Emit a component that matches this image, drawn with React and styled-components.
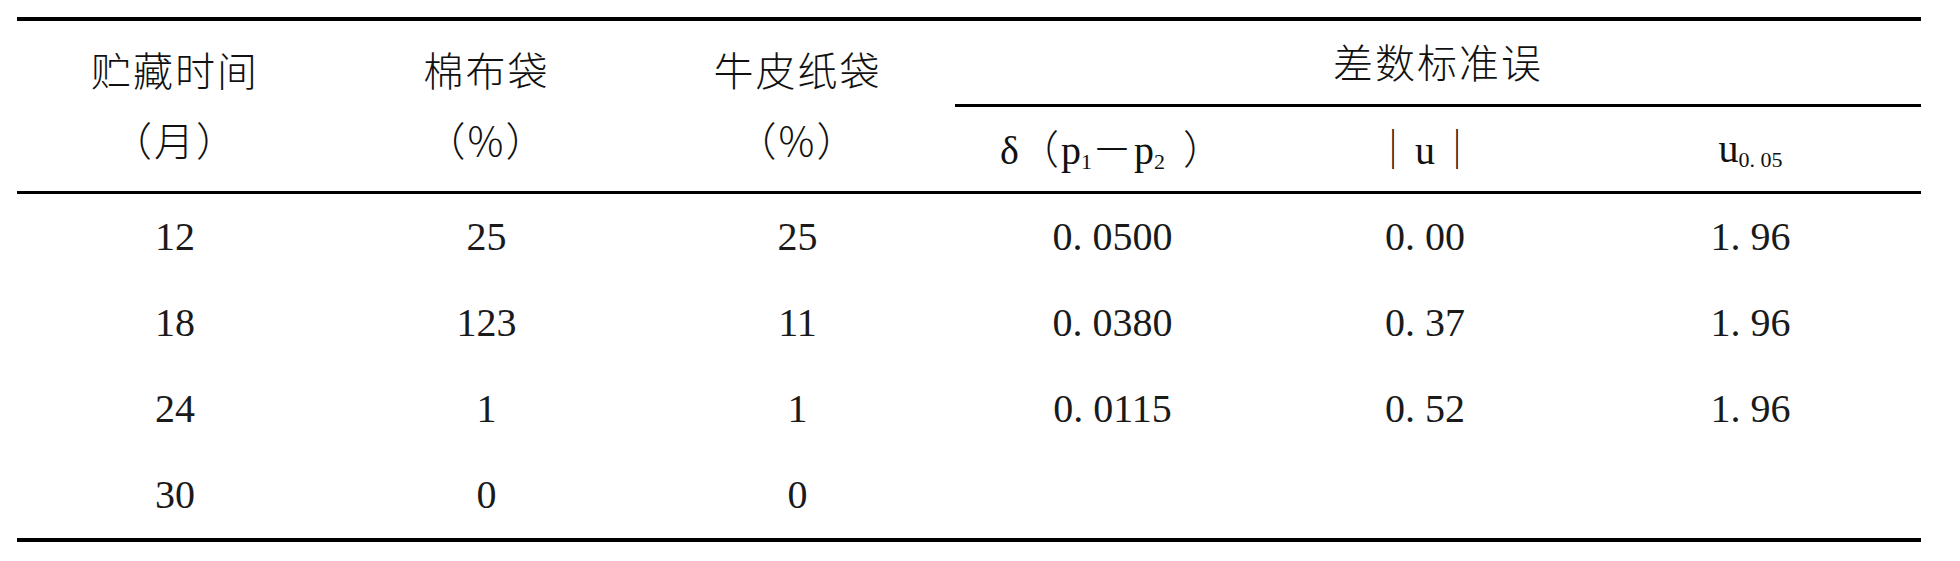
import React from "react";
import styled, { createGlobalStyle } from "styled-components";

const GlobalStyle = createGlobalStyle`
  html, body {
    margin: 0;
    padding: 0;
    background: #fff;
  }
  body {
    font-family: "Liberation Serif", "Noto Sans CJK SC", serif;
    color: #111;
  }
`;

const Page = styled.div`
  padding: 17px 0 0 17px;
`;

const Table = styled.table`
  width: 1904px;
  table-layout: fixed;
  border-collapse: separate;
  border-spacing: 0;
  border-top: 4px solid #000;
  border-bottom: 4px solid #000;
`;

const Col = styled.col`
  width: ${(p) => p.$w}px;
`;

const Row = styled.tr`
  height: ${(p) => p.$h}px;
`;

const Th = styled.th`
  padding: 0;
  font-weight: 400;
  font-size: 40px;
  line-height: 66px;
  text-align: center;
  vertical-align: middle;
  border-bottom: ${(p) => (p.$rule ? "3px solid #000" : "none")};
`;

const Td = styled.td`
  padding: 0;
  font-size: 40px;
  line-height: 1;
  text-align: center;
  vertical-align: middle;
  color: #1a1a1a;
`;

const Cjk = styled.span`
  font-family: "Noto Sans CJK SC", sans-serif;
  font-weight: 300;
  letter-spacing: 2px;
`;

const Sub = styled.sub`
  font-size: 0.55em;
  line-height: 0;
  vertical-align: -0.22em;
`;

const Bar = styled.span`
  font-family: "Noto Sans CJK SC", sans-serif;
  font-weight: 300;
  padding: 0 2px;
`;

const Gap = styled.span`
  display: inline-block;
  width: ${(p) => p.$w}px;
`;

const widths = [316, 307, 315, 315, 310, 341];

const rows = [
  ["12", "25", "25", "0. 0500", "0. 00", "1. 96"],
  ["18", "123", "11", "0. 0380", "0. 37", "1. 96"],
  ["24", "1", "1", "0. 0115", "0. 52", "1. 96"],
  ["30", "0", "0", "", "", ""],
];

export default function App() {
  return (
    <>
      <GlobalStyle />
      <Page>
        <Table>
          <colgroup>
            {widths.map((w, i) => (
              <Col key={i} $w={w} />
            ))}
          </colgroup>
          <thead>
            <Row $h={86}>
              <Th rowSpan={2} $rule>
                <Cjk>贮藏时间</Cjk>
                <br />
                <Cjk>（月）</Cjk>
              </Th>
              <Th rowSpan={2} $rule>
                <Cjk>棉布袋</Cjk>
                <br />
                <Cjk>（%）</Cjk>
              </Th>
              <Th rowSpan={2} $rule>
                <Cjk>牛皮纸袋</Cjk>
                <br />
                <Cjk>（%）</Cjk>
              </Th>
              <Th colSpan={3} $rule>
                <Cjk>差数标准误</Cjk>
              </Th>
            </Row>
            <Row $h={87}>
              <Th $rule>
                δ<Cjk>（</Cjk>p<Sub>1</Sub>
                <Cjk>－</Cjk>p<Sub>2</Sub>
                <Gap $w={18} />
                <Cjk>）</Cjk>
              </Th>
              <Th $rule>
                <Bar>｜</Bar>u<Bar>｜</Bar>
              </Th>
              <Th $rule>
                u<Sub>0. 05</Sub>
              </Th>
            </Row>
          </thead>
          <tbody>
            {rows.map((r, i) => (
              <Row key={i} $h={86}>
                {r.map((c, j) => (
                  <Td key={j}>{c}</Td>
                ))}
              </Row>
            ))}
          </tbody>
        </Table>
      </Page>
    </>
  );
}
